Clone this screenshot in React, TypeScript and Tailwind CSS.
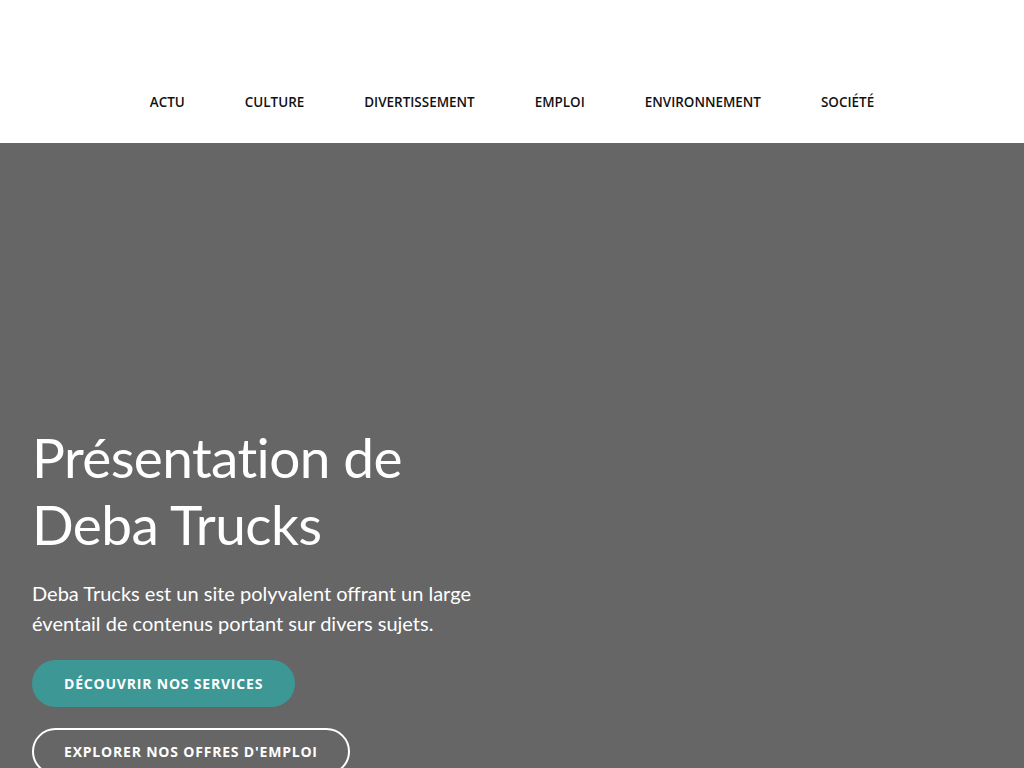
const navItems = ['ACTU', 'CULTURE', 'DIVERTISSEMENT', 'EMPLOI', 'ENVIRONNEMENT', 'SOCIÉTÉ']

function Header() {
  return (
    <header className="h-[143px] bg-white flex items-end justify-center pb-[29px]">
      <nav className="flex gap-[60px]">
        {navItems.map((item) => (
          <a key={item} href="#"
            className="text-[13.45px] font-semibold text-[#111] leading-[24px] font-['Open_Sans',sans-serif]">
            {item}
          </a>
        ))}
      </nav>
    </header>
  )
}

function Hero() {
  return (
    <section className="bg-[#666666] min-h-[625px] px-8 pt-[281px] pb-10">
      <div className="max-w-[470px]">
        <h1 className="text-white text-[55px] leading-[67px] font-normal font-['Lato',sans-serif] tracking-[-0.6px]">
          Présentation de Deba Trucks
        </h1>
        <p className="mt-5 text-white text-[20px] leading-[30px] font-['Lato',sans-serif]">
          Deba Trucks est un site polyvalent offrant un large éventail de contenus portant sur divers sujets.
        </p>
        <div className="mt-[22px] flex flex-col items-start gap-[21px]">
          <a href="#"
            className="h-[47px] px-8 flex items-center rounded-full bg-[#3d9795] text-white text-[14px] font-bold tracking-[0.8px] font-['Open_Sans',sans-serif]">
            DÉCOUVRIR NOS SERVICES
          </a>
          <a href="#"
            className="h-[47px] px-[30px] flex items-center rounded-full border-2 border-white text-white text-[14px] font-bold tracking-[0.8px] font-['Open_Sans',sans-serif]">
            EXPLORER NOS OFFRES D'EMPLOI
          </a>
        </div>
      </div>
    </section>
  )
}

export default function App() {
  return (
    <div className="min-h-screen bg-white">
      <Header />
      <Hero />
    </div>
  )
}
